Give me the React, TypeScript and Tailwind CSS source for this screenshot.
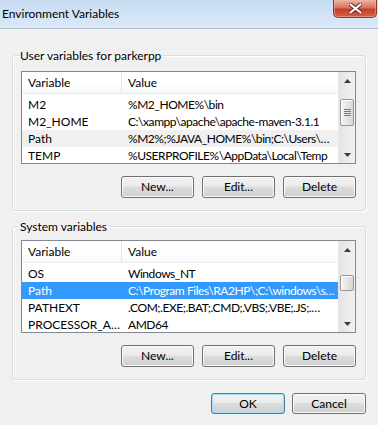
import React from 'react'

interface Row {
  name: string
  value: string
  state?: 'selected' | 'inactive'
}

const userVars: Row[] = [
  { name: 'M2', value: '%M2_HOME%\\bin' },
  { name: 'M2_HOME', value: 'C:\\xampp\\apache\\apache-maven-3.1.1' },
  { name: 'Path', value: '%M2%;%JAVA_HOME%\\bin;C:\\Users\\…', state: 'inactive' },
  { name: 'TEMP', value: '%USERPROFILE%\\AppData\\Local\\Temp' },
]

const systemVars: Row[] = [
  { name: 'OS', value: 'Windows_NT' },
  { name: 'Path', value: 'C:\\Program Files\\RA2HP\\;C:\\windows\\s…', state: 'selected' },
  { name: 'PATHEXT', value: '.COM;.EXE;.BAT;.CMD;.VBS;.VBE;.JS;.…' },
  { name: 'PROCESSOR_A…', value: 'AMD64' },
]

function ArrowUp() {
  return (
    <svg width="7" height="4" viewBox="0 0 7 4" aria-hidden="true">
      <path d="M0 4 L3.5 0 L7 4 Z" fill="#3b3b3b" />
    </svg>
  )
}

function ArrowDown() {
  return (
    <svg width="7" height="4" viewBox="0 0 7 4" aria-hidden="true">
      <path d="M0 0 L3.5 4 L7 0 Z" fill="#3b3b3b" />
    </svg>
  )
}

function ScrollBar({ thumbTop, thumbHeight, grip }: { thumbTop: number; thumbHeight: number; grip?: boolean }) {
  return (
    <div className="w-[17px] shrink-0 flex flex-col bg-[linear-gradient(90deg,#e4e4e4,#f1f1f1)] border-l border-[#e8e8e8]">
      <div className="h-[17px] shrink-0 flex items-center justify-center">
        <ArrowUp />
      </div>
      <div className="flex-1 flex flex-col">
        <div
          className="mx-[1px] rounded-[2px] border border-[#979797] bg-[linear-gradient(90deg,#f5f5f5,#e6e6e6_50%,#d7d7d7)] shadow-[inset_1px_1px_0_#ffffff] flex flex-col items-center justify-center gap-[1px]"
          style={{ marginTop: thumbTop, height: thumbHeight }}
        >
          {grip && (
            <>
              <div className="w-[7px] h-[1px] bg-[#7a7a7a]" />
              <div className="w-[7px] h-[1px] bg-[#7a7a7a]" />
              <div className="w-[7px] h-[1px] bg-[#7a7a7a]" />
              <div className="w-[7px] h-[1px] bg-[#7a7a7a]" />
            </>
          )}
        </div>
      </div>
      <div className="h-[17px] shrink-0 flex items-center justify-center">
        <ArrowDown />
      </div>
    </div>
  )
}

function ListView({ rows, thumbTop, thumbHeight, grip }: { rows: Row[]; thumbTop: number; thumbHeight: number; grip?: boolean }) {
  return (
    <div className="h-[93px] border border-[#828790] bg-white flex overflow-hidden">
      <div className="flex-1 min-w-0 flex flex-col overflow-hidden">
        {/* Header */}
        <div className="h-[22px] shrink-0 flex bg-[linear-gradient(#ffffff,#ffffff_60%,#f6f7f9)] border-b border-[#e8eaed]">
          <div className="w-[100px] pl-[6px] flex items-center border-r border-[#e5e5e5]">Variable</div>
          <div className="flex-1 pl-[6px] flex items-center">Value</div>
        </div>
        <div className="pt-[2px] flex flex-col">
          {rows.map(r => (
            <div
              key={r.name}
              className={`h-[17px] shrink-0 flex items-center whitespace-nowrap
                ${r.state === 'selected' ? 'bg-[#3399ff] text-white' : ''}
                ${r.state === 'inactive' ? 'bg-[#f0f0f0]' : ''}`}
            >
              <div className="w-[100px] shrink-0 pl-[6px] overflow-hidden">{r.name}</div>
              <div className="flex-1 min-w-0 pl-[6px] overflow-hidden tracking-[-0.45px]">{r.value}</div>
            </div>
          ))}
        </div>
      </div>
      <ScrollBar thumbTop={thumbTop} thumbHeight={thumbHeight} grip={grip} />
    </div>
  )
}

function Button({ label, wide, isDefault }: { label: string; wide?: boolean; isDefault?: boolean }) {
  return (
    <button
      className={`${wide ? 'w-[74px] h-[21px]' : 'w-[73px] h-[22px]'} rounded-[3px] border text-black flex items-center justify-center
        bg-[linear-gradient(#f2f2f2,#ebebeb_45%,#dddddd_50%,#cfcfcf)]
        ${isDefault
          ? 'border-[#3c7fb1] shadow-[inset_0_0_0_1px_#a7dcf7]'
          : 'border-[#707070] shadow-[inset_0_0_0_1px_#fbfbfb]'}`}
    >
      {label}
    </button>
  )
}

function GroupBox({ title, children, top }: { title: string; children: React.ReactNode; top: number }) {
  return (
    <fieldset
      className="min-w-0 border border-[#d5dfe5] rounded-[3px] pl-[8px] pr-[9px] pb-[12px] shadow-[1px_1px_0_#ffffff,inset_1px_1px_0_#ffffff]"
      style={{ paddingTop: top }}
    >
      <legend className="ml-[-2px] px-[1px] leading-[15px]">{title}</legend>
      {children}
    </fieldset>
  )
}

export default function App() {
  return (
    <div className="w-[378px] h-[425px] bg-[#f0f0f0] flex flex-col text-[12px] text-black font-['Lato','Noto_Sans',sans-serif] overflow-hidden">
      {/* Title bar */}
      <div className="h-[29px] shrink-0 flex items-start bg-[linear-gradient(#c6daf0,#d3e4f6_55%,#dbe9f7)] border-b border-[#aebdcc]">
        <div className="pl-[2px] h-[28px] flex items-center text-[12px]">Environment Variables</div>
        <div className="ml-auto mr-[1px] w-[44px] h-[18px] rounded-b-[5px] border border-t-0 border-[#8a3a2f] bg-[linear-gradient(#eab1a5,#d9735f_45%,#c63e26_55%,#d5604a)] shadow-[inset_0_0_0_1px_#f0b8aa80] flex items-center justify-center">
          <svg width="13" height="11" viewBox="0 0 13 11" aria-hidden="true">
            <path d="M1.5 1.5 L11.5 9.5 M11.5 1.5 L1.5 9.5" stroke="#5b2a22" strokeWidth="4" strokeLinecap="round" />
            <path d="M1.5 1.5 L11.5 9.5 M11.5 1.5 L1.5 9.5" stroke="#ffffff" strokeWidth="2.2" strokeLinecap="round" />
          </svg>
        </div>
      </div>

      {/* Body */}
      <div className="px-[12px] pt-[19px] flex flex-col">
        <GroupBox title="User variables for parkerpp" top={8}>
          <ListView rows={userVars} thumbTop={10} thumbHeight={27} grip />
          <div className="mt-[12px] flex justify-end gap-[8px]">
            <Button label="New..." />
            <Button label="Edit..." />
            <Button label="Delete" />
          </div>
        </GroupBox>

        <div className="mt-[8px]">
          <GroupBox title="System variables" top={6}>
            <ListView rows={systemVars} thumbTop={17} thumbHeight={16} />
            <div className="mt-[12px] flex justify-end gap-[8px]">
              <Button label="New..." />
              <Button label="Edit..." />
              <Button label="Delete" />
            </div>
          </GroupBox>
        </div>

        <div className="mt-[13px] flex justify-end gap-[7px]">
          <Button label="OK" wide isDefault />
          <Button label="Cancel" wide />
        </div>
      </div>
    </div>
  )
}
